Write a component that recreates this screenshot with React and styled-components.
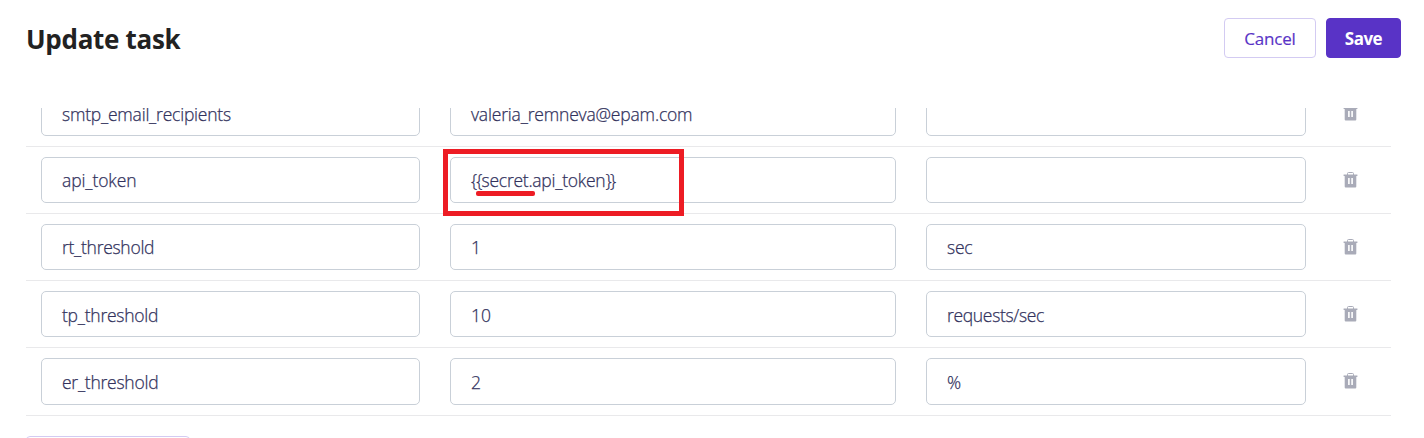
import React from "react";
import styled, { createGlobalStyle } from "styled-components";

const GlobalStyle = createGlobalStyle`
  *, *::before, *::after { box-sizing: border-box; }
  body {
    margin: 0;
    background: #fff;
    font-family: "Open Sans", "Noto Sans", sans-serif;
    overflow: hidden;
  }
`;

const Page = styled.main`
  width: 1424px;
  height: 438px;
  display: flex;
  flex-direction: column;
  overflow: hidden;
`;

const Header = styled.header`
  flex: none;
  height: 108px;
  padding: 18px 23px 0 26px;
  display: flex;
  justify-content: space-between;
  align-items: flex-start;
`;

const Title = styled.h1`
  margin: 0;
  font-size: 26px;
  line-height: 42px;
  font-weight: 700;
  letter-spacing: -0.3px;
  color: #222;
  white-space: nowrap;
`;

const Actions = styled.div`
  display: flex;
  gap: 10px;
`;

const Button = styled.button`
  width: ${(p) => (p.$primary ? 75 : 92)}px;
  height: 40px;
  padding: ${(p) => (p.$primary ? 0 : 1)}px 0 0;
  border: 1px solid ${(p) => (p.$primary ? "#5933c6" : "#d3cbf2")};
  border-radius: 4px;
  background: ${(p) => (p.$primary ? "#5933c6" : "#fff")};
  color: ${(p) => (p.$primary ? "#fff" : "#5933c6")};
  -webkit-text-stroke: ${(p) => (p.$primary ? 0 : 0.15)}px;
  font-family: inherit;
  font-size: 17px;
  font-weight: ${(p) => (p.$primary ? 700 : 500)};
  letter-spacing: ${(p) => (p.$primary ? -0.5 : -0.2)}px;
`;

const Body = styled.section`
  flex: 1;
  min-height: 0;
  overflow: hidden;
  padding: 0 33px 0 26px;
`;

const Table = styled.div`
  margin-top: -28px;
`;

const Row = styled.div`
  height: ${(p) => p.$height}px;
  border-bottom: 1px solid #e9e9eb;
  padding: 10px 15px;
  display: grid;
  grid-template-columns: 379px 446px 380px 1fr;
  column-gap: 30px;
`;

const Field = styled.div`
  position: relative;
  display: flex;
  align-items: center;
  padding: ${(p) => (p.$lowered ? 2 : 0)}px 20px 0;
  border: 1px solid #c9d0d8;
  border-radius: 5px;
  color: #32325d;
  font-size: 17.5px;
  font-weight: 300;
  -webkit-text-stroke: 0.25px #32325d;
  white-space: nowrap;
`;

const Value = styled.span`
  letter-spacing: ${(p) => p.$spacing || 0}px;
`;

const Brace = styled.span`
  letter-spacing: ${(p) => (p.$open ? -0.9 : -1.6)}px;
`;

const Remove = styled.div`
  display: flex;
  align-items: center;
  padding-left: 7px;
`;

const Highlight = styled.div`
  position: absolute;
  left: -8px;
  top: -9px;
  width: 241px;
  height: 67px;
  border: 5px solid #ed1c24;
`;

const Underline = styled.div`
  position: absolute;
  left: 25px;
  top: 33px;
  width: 59px;
  height: 5px;
  border-radius: 2px;
  background: #ed1c24;
`;

const AddButton = styled.button`
  display: block;
  width: 164px;
  height: 40px;
  margin-top: 20px;
  border: 1px solid #d3cbf2;
  border-radius: 4px;
  background: #fff;
`;

const TrashIcon = () => (
  <svg width="15" height="17" viewBox="0 0 15 17" fill="none">
    <path d="M4.5 3V1.5Q4.5 .5 5.5 .5H9.5Q10.5 .5 10.5 1.5V3" stroke="#a9abb8" />
    <path
      fillRule="evenodd"
      fill="#a9abb8"
      d="M.6 2.4H14.4V3.9H13.3V14.6Q13.3 15.6 12.3 15.6H2.7Q1.7 15.6 1.7 14.6V3.9H.6ZM5.1 6V12H6.7V6ZM8.3 6V12H9.9V6Z"
    />
  </svg>
);

const secretToken = (
  <>
    <Brace $open>{"{{"}</Brace>secret.api_token<Brace>{"}}"}</Brace>
  </>
);

const rows = [
  { height: 67, cells: [["smtp_email_recipients", -0.22], ["valeria_remneva@epam.com", -0.18], null], lowered: true },
  { height: 67, cells: [["api_token", -0.1], [secretToken, -0.25], null], marked: true },
  { height: 67, cells: [["rt_threshold", -0.28], ["1", 0], ["sec", -0.2]] },
  { height: 67, cells: [["tp_threshold", -0.25], ["10", -0.1], ["requests/sec", -0.33]], lowered: true },
  { height: 68, cells: [["er_threshold", -0.25], ["2", 0], ["%", 0]] },
];

export default function App() {
  return (
    <Page>
      <GlobalStyle />
      <Header>
        <Title>Update task</Title>
        <Actions>
          <Button>Cancel</Button>
          <Button $primary>Save</Button>
        </Actions>
      </Header>
      <Body>
        <Table>
          {rows.map((row, r) => (
            <Row key={r} $height={row.height}>
              {row.cells.map((cell, c) => (
                <Field key={c} $lowered={row.lowered}>
                  {cell && <Value $spacing={cell[1]}>{cell[0]}</Value>}
                  {row.marked && c === 1 && (
                    <>
                      <Highlight />
                      <Underline />
                    </>
                  )}
                </Field>
              ))}
              <Remove>
                <TrashIcon />
              </Remove>
            </Row>
          ))}
        </Table>
        <AddButton aria-label="Add parameter" />
      </Body>
    </Page>
  );
}
